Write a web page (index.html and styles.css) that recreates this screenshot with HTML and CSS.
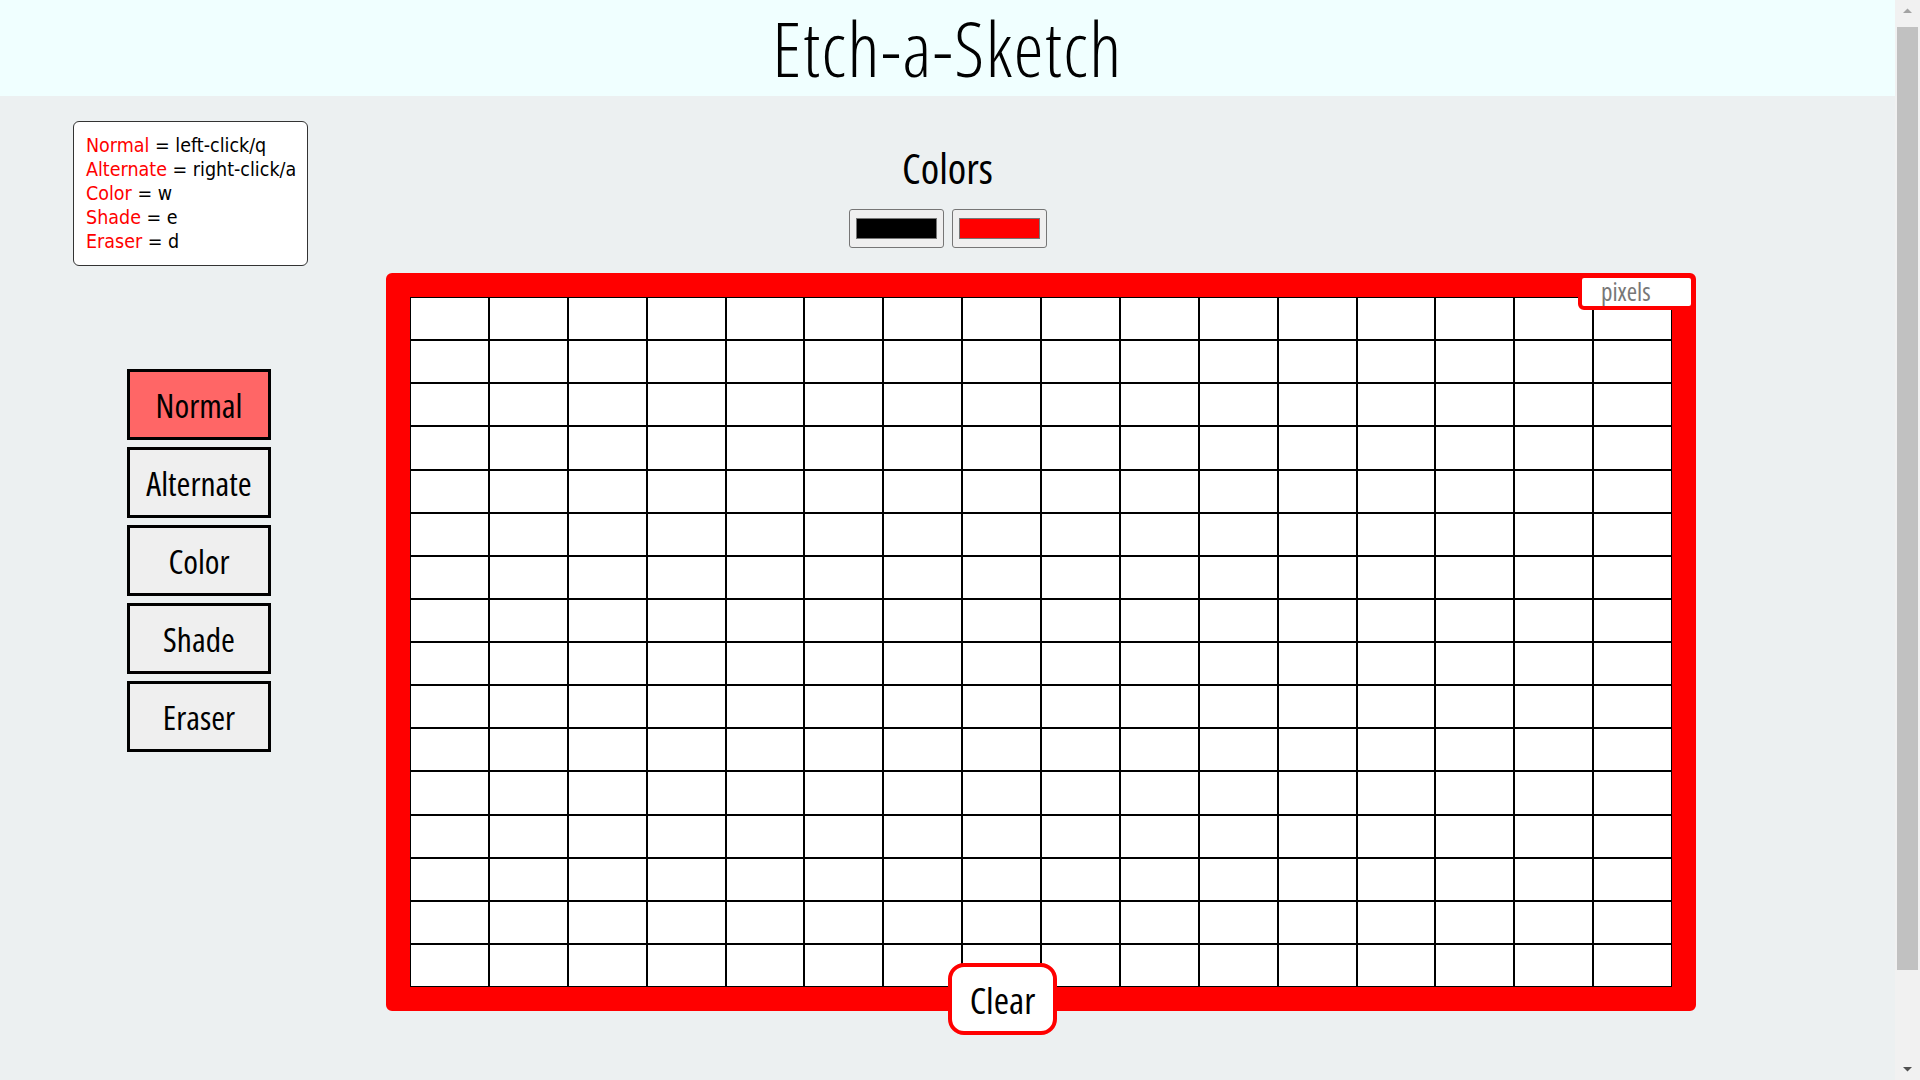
FILE: index.html
```html
<!DOCTYPE html>
<html lang="en">
<head>
<meta charset="utf-8">
<title>Etch-a-Sketch</title>
<link rel="stylesheet" href="styles.css">
</head>
<body>
<header class="site-header">
  <h1 class="title">Etch-a-Sketch</h1>
</header>
<main class="layout">
  <div class="legend">
    <div class="legend-line"><span class="key">Normal</span> = left-click/q</div>
    <div class="legend-line"><span class="key">Alternate</span> = right-click/a</div>
    <div class="legend-line"><span class="key">Color</span> = w</div>
    <div class="legend-line"><span class="key">Shade</span> = e</div>
    <div class="legend-line"><span class="key">Eraser</span> = d</div>
  </div>
  <section class="colors">
    <h2 class="colors-title">Colors</h2>
    <div class="swatches">
      <div class="swatch"><div class="swatch-fill swatch-black"></div></div>
      <div class="swatch"><div class="swatch-fill swatch-red"></div></div>
    </div>
  </section>
  <nav class="modes">
    <button class="mode mode-active">Normal</button>
    <button class="mode">Alternate</button>
    <button class="mode">Color</button>
    <button class="mode">Shade</button>
    <button class="mode">Eraser</button>
  </nav>
  <div class="frame">
    <div class="grid">
      <div class="cell"></div><div class="cell"></div><div class="cell"></div><div class="cell"></div><div class="cell"></div><div class="cell"></div><div class="cell"></div><div class="cell"></div><div class="cell"></div><div class="cell"></div><div class="cell"></div><div class="cell"></div><div class="cell"></div><div class="cell"></div><div class="cell"></div><div class="cell"></div>
      <div class="cell"></div><div class="cell"></div><div class="cell"></div><div class="cell"></div><div class="cell"></div><div class="cell"></div><div class="cell"></div><div class="cell"></div><div class="cell"></div><div class="cell"></div><div class="cell"></div><div class="cell"></div><div class="cell"></div><div class="cell"></div><div class="cell"></div><div class="cell"></div>
      <div class="cell"></div><div class="cell"></div><div class="cell"></div><div class="cell"></div><div class="cell"></div><div class="cell"></div><div class="cell"></div><div class="cell"></div><div class="cell"></div><div class="cell"></div><div class="cell"></div><div class="cell"></div><div class="cell"></div><div class="cell"></div><div class="cell"></div><div class="cell"></div>
      <div class="cell"></div><div class="cell"></div><div class="cell"></div><div class="cell"></div><div class="cell"></div><div class="cell"></div><div class="cell"></div><div class="cell"></div><div class="cell"></div><div class="cell"></div><div class="cell"></div><div class="cell"></div><div class="cell"></div><div class="cell"></div><div class="cell"></div><div class="cell"></div>
      <div class="cell"></div><div class="cell"></div><div class="cell"></div><div class="cell"></div><div class="cell"></div><div class="cell"></div><div class="cell"></div><div class="cell"></div><div class="cell"></div><div class="cell"></div><div class="cell"></div><div class="cell"></div><div class="cell"></div><div class="cell"></div><div class="cell"></div><div class="cell"></div>
      <div class="cell"></div><div class="cell"></div><div class="cell"></div><div class="cell"></div><div class="cell"></div><div class="cell"></div><div class="cell"></div><div class="cell"></div><div class="cell"></div><div class="cell"></div><div class="cell"></div><div class="cell"></div><div class="cell"></div><div class="cell"></div><div class="cell"></div><div class="cell"></div>
      <div class="cell"></div><div class="cell"></div><div class="cell"></div><div class="cell"></div><div class="cell"></div><div class="cell"></div><div class="cell"></div><div class="cell"></div><div class="cell"></div><div class="cell"></div><div class="cell"></div><div class="cell"></div><div class="cell"></div><div class="cell"></div><div class="cell"></div><div class="cell"></div>
      <div class="cell"></div><div class="cell"></div><div class="cell"></div><div class="cell"></div><div class="cell"></div><div class="cell"></div><div class="cell"></div><div class="cell"></div><div class="cell"></div><div class="cell"></div><div class="cell"></div><div class="cell"></div><div class="cell"></div><div class="cell"></div><div class="cell"></div><div class="cell"></div>
      <div class="cell"></div><div class="cell"></div><div class="cell"></div><div class="cell"></div><div class="cell"></div><div class="cell"></div><div class="cell"></div><div class="cell"></div><div class="cell"></div><div class="cell"></div><div class="cell"></div><div class="cell"></div><div class="cell"></div><div class="cell"></div><div class="cell"></div><div class="cell"></div>
      <div class="cell"></div><div class="cell"></div><div class="cell"></div><div class="cell"></div><div class="cell"></div><div class="cell"></div><div class="cell"></div><div class="cell"></div><div class="cell"></div><div class="cell"></div><div class="cell"></div><div class="cell"></div><div class="cell"></div><div class="cell"></div><div class="cell"></div><div class="cell"></div>
      <div class="cell"></div><div class="cell"></div><div class="cell"></div><div class="cell"></div><div class="cell"></div><div class="cell"></div><div class="cell"></div><div class="cell"></div><div class="cell"></div><div class="cell"></div><div class="cell"></div><div class="cell"></div><div class="cell"></div><div class="cell"></div><div class="cell"></div><div class="cell"></div>
      <div class="cell"></div><div class="cell"></div><div class="cell"></div><div class="cell"></div><div class="cell"></div><div class="cell"></div><div class="cell"></div><div class="cell"></div><div class="cell"></div><div class="cell"></div><div class="cell"></div><div class="cell"></div><div class="cell"></div><div class="cell"></div><div class="cell"></div><div class="cell"></div>
      <div class="cell"></div><div class="cell"></div><div class="cell"></div><div class="cell"></div><div class="cell"></div><div class="cell"></div><div class="cell"></div><div class="cell"></div><div class="cell"></div><div class="cell"></div><div class="cell"></div><div class="cell"></div><div class="cell"></div><div class="cell"></div><div class="cell"></div><div class="cell"></div>
      <div class="cell"></div><div class="cell"></div><div class="cell"></div><div class="cell"></div><div class="cell"></div><div class="cell"></div><div class="cell"></div><div class="cell"></div><div class="cell"></div><div class="cell"></div><div class="cell"></div><div class="cell"></div><div class="cell"></div><div class="cell"></div><div class="cell"></div><div class="cell"></div>
      <div class="cell"></div><div class="cell"></div><div class="cell"></div><div class="cell"></div><div class="cell"></div><div class="cell"></div><div class="cell"></div><div class="cell"></div><div class="cell"></div><div class="cell"></div><div class="cell"></div><div class="cell"></div><div class="cell"></div><div class="cell"></div><div class="cell"></div><div class="cell"></div>
      <div class="cell"></div><div class="cell"></div><div class="cell"></div><div class="cell"></div><div class="cell"></div><div class="cell"></div><div class="cell"></div><div class="cell"></div><div class="cell"></div><div class="cell"></div><div class="cell"></div><div class="cell"></div><div class="cell"></div><div class="cell"></div><div class="cell"></div><div class="cell"></div>
    </div>
    <input class="pixels" type="text" placeholder="pixels">
    <button class="clear">Clear</button>
  </div>
</main>
<div class="scrollbar" aria-hidden="true">
  <svg class="scroll-arrow" width="25" height="20" viewBox="0 0 25 20"><polygon points="8,13 17,13 12.5,8.5" fill="#a3a3a3"/></svg>
  <div class="scroll-track"><div class="scroll-thumb"></div></div>
  <svg class="scroll-arrow" width="25" height="20" viewBox="0 0 25 20"><polygon points="8,7 17,7 12.5,11.5" fill="#505050"/></svg>
</div>
</body>
</html>
```
FILE: styles.css
```css
html {
  background: #ecf0f1;
}
body {
  margin: 0 25px 0 0;
  background: #ecf0f1;
  font-family: "Open Sans", "DejaVu Sans", sans-serif;
  font-stretch: 75%;
  color: #000;
}

.site-header {
  background: #f0ffff;
  height: 96px;
}
.title {
  margin: 0;
  padding-top: 1px;
  line-height: 95px;
  font-size: 75px;
  font-weight: 300;
  letter-spacing: 1.5px;
  text-align: center;
}

.layout {
  display: grid;
  grid-template-columns: 386px 1310px 1fr;
  grid-template-rows: auto auto;
  padding-top: 25px;
  padding-bottom: 180px;
}

.legend {
  grid-row: 1;
  grid-column: 1;
  align-self: start;
  margin-left: 73px;
  width: 235px;
  height: 145px;
  box-sizing: border-box;
  padding: 12px 0 11px 12px;
  background: #fff;
  border: 1px solid #333;
  border-radius: 6px;
  font-family: "DejaVu Sans", sans-serif;
  font-stretch: condensed;
  font-size: 19.5px;
  line-height: 24px;
}
.legend-line {
  white-space: nowrap;
}
.key {
  color: #ff0000;
}

.colors {
  grid-row: 1;
  grid-column: 1 / -1;
  justify-self: center;
  align-self: start;
  text-align: center;
}
.colors-title {
  margin: 26px 0 0;
  font-size: 42px;
  line-height: 42px;
  font-weight: 500;
}
.swatches {
  display: flex;
  gap: 8px;
  margin-top: 20px;
}
.swatch {
  width: 95px;
  height: 39px;
  box-sizing: border-box;
  padding: 8px 6px;
  background: #efefef;
  border: 1px solid #767676;
  border-radius: 3px;
}
.swatch-fill {
  height: 100%;
  box-sizing: border-box;
  border: 1px solid #767676;
}
.swatch-black {
  background: #000;
}
.swatch-red {
  background: #ff0000;
}

.modes {
  grid-row: 2;
  grid-column: 1;
  align-self: start;
  margin-top: 103px;
  margin-left: 127px;
  display: flex;
  flex-direction: column;
  gap: 7px;
}
.mode {
  width: 144px;
  height: 71px;
  box-sizing: border-box;
  border: 3px solid #000;
  background: #efefef;
  font-family: inherit;
  font-stretch: inherit;
  font-size: 33.5px;
  font-weight: 500;
  color: #000;
  padding: 0;
}
.mode-active {
  background: #ff6666;
}

.frame {
  grid-row: 2;
  grid-column: 2;
  position: relative;
  margin-top: 7px;
  width: 1310px;
  height: 738px;
  box-sizing: border-box;
  border: 24px solid #ff0000;
  border-radius: 6px;
}
.grid {
  display: grid;
  grid-template-columns: repeat(16, 1fr);
  grid-template-rows: repeat(16, 1fr);
  width: 100%;
  height: 100%;
}
.cell {
  background: #fff;
  border: 1px solid #000;
}

.pixels {
  position: absolute;
  top: -23px;
  right: -23px;
  width: 117px;
  height: 36px;
  box-sizing: border-box;
  border: 4px solid #ff0000;
  border-radius: 6px;
  background: #fff;
  padding: 0 0 2px 19px;
  font-family: inherit;
  font-stretch: inherit;
  font-size: 25px;
  outline: none;
}
.pixels::placeholder {
  color: #777;
}

.clear {
  position: absolute;
  left: 538px;
  bottom: -48px;
  width: 109px;
  height: 72px;
  box-sizing: border-box;
  border: 4px solid #ff0000;
  border-radius: 16px;
  background: #fff;
  font-family: inherit;
  font-stretch: inherit;
  font-size: 37px;
  font-weight: 500;
  color: #000;
  padding: 0;
}

.scrollbar {
  position: fixed;
  top: 0;
  right: 0;
  width: 25px;
  height: 100vh;
  background: #f1f1f1;
  display: flex;
  flex-direction: column;
}
.scroll-arrow {
  display: block;
  flex: none;
}
.scroll-track {
  flex: 1;
  padding: 7px 2px 0;
}
.scroll-thumb {
  height: 943px;
  background: #c1c1c1;
}
```
